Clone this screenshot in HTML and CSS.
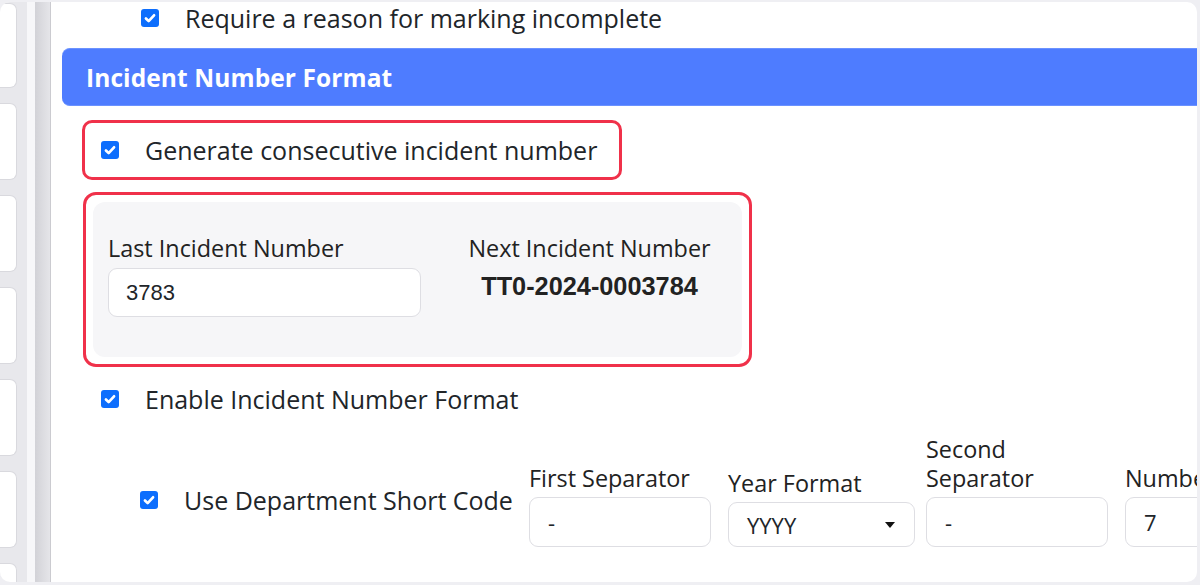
FILE: index.html
```html
<!DOCTYPE html>
<html lang="en">
<head>
<meta charset="utf-8">
<title>Incident Number Format</title>
<link rel="stylesheet" href="styles.css">
</head>
<body>
<div class="frame">
  <aside class="rail">
    <div class="rail-card rail-card-first"></div>
    <div class="rail-card"></div>
    <div class="rail-card"></div>
    <div class="rail-card"></div>
    <div class="rail-card"></div>
    <div class="rail-card"></div>
    <div class="rail-card"></div>
  </aside>
  <div class="gutter"></div>
  <div class="splitter"></div>
  <main class="content">
    <label class="check-row row-require">
      <span class="cb"><svg viewBox="0 0 20 20" width="18" height="18"><path d="M5.5 10.5l3 3 6-6.5" fill="none" stroke="#fff" stroke-width="3" stroke-linecap="round" stroke-linejoin="round"/></svg></span>
      <span class="check-text">Require a reason for marking incomplete</span>
    </label>

    <h2 class="section-head">Incident Number Format</h2>

    <div class="highlight hl-check">
      <label class="check-row">
        <span class="cb"><svg viewBox="0 0 20 20" width="18" height="18"><path d="M5.5 10.5l3 3 6-6.5" fill="none" stroke="#fff" stroke-width="3" stroke-linecap="round" stroke-linejoin="round"/></svg></span>
        <span class="check-text">Generate consecutive incident number</span>
      </label>
    </div>

    <div class="highlight hl-panel">
      <div class="panel">
        <div class="field">
          <label class="field-label">Last Incident Number</label>
          <input class="text-input num-input" type="text" value="3783">
        </div>
        <div class="next">
          <div class="field-label">Next Incident Number</div>
          <div class="next-value">TT0-2024-0003784</div>
        </div>
      </div>
    </div>

    <label class="check-row row-enable">
      <span class="cb"><svg viewBox="0 0 20 20" width="18" height="18"><path d="M5.5 10.5l3 3 6-6.5" fill="none" stroke="#fff" stroke-width="3" stroke-linecap="round" stroke-linejoin="round"/></svg></span>
      <span class="check-text">Enable Incident Number Format</span>
    </label>

    <div class="format-row">
      <label class="check-row row-dept">
        <span class="cb"><svg viewBox="0 0 20 20" width="18" height="18"><path d="M5.5 10.5l3 3 6-6.5" fill="none" stroke="#fff" stroke-width="3" stroke-linecap="round" stroke-linejoin="round"/></svg></span>
        <span class="check-text">Use Department Short Code</span>
      </label>
      <div class="field fmt-field">
        <label class="field-label">First Separator</label>
        <input class="text-input fmt-input" type="text" value="-">
      </div>
      <div class="field fmt-field fmt-year">
        <label class="field-label">Year Format</label>
        <div class="select-box">
          <span>YYYY</span>
          <svg class="caret" viewBox="0 0 10 6" width="10" height="6"><path d="M0 0h10L5 6z" fill="#111"/></svg>
        </div>
      </div>
      <div class="field fmt-field">
        <label class="field-label">Second<br>Separator</label>
        <input class="text-input fmt-input" type="text" value="-">
      </div>
      <div class="field fmt-field fmt-last">
        <label class="field-label nowrap">Number</label>
        <input class="text-input fmt-input" type="text" value="7">
      </div>
    </div>
  </main>
</div>
</body>
</html>
```

FILE: styles.css
```css
html, body {
  margin: 0;
  padding: 0;
}

body {
  background: #efeff3;
  font-family: "Open Sans", "Noto Sans", sans-serif;
  color: #212529;
  overflow: hidden;
}

.frame {
  display: flex;
  width: 1197px;
  height: 580px;
  margin-top: 2px;
  background: #fff;
  border-radius: 10px;
  overflow: hidden;
}

/* left rail */
.rail {
  width: 27px;
  flex: none;
  background: #e8e8ec;
  display: flex;
  flex-direction: column;
  gap: 15px;
  padding-top: 1px;
  box-sizing: border-box;
}

.rail-card {
  flex: none;
  width: 17px;
  height: 77px;
  box-sizing: border-box;
  background: #fff;
  border: 1px solid #d9d9de;
  border-left: none;
  border-radius: 0 7px 7px 0;
}

.rail-card-first {
  height: 85px;
}

.gutter {
  width: 8px;
  flex: none;
  background: #f7f7f9;
}

.splitter {
  width: 15px;
  flex: none;
  background: linear-gradient(90deg, #d2d2d7, #e5e5e9);
  border-right: 1px solid #cbcbd0;
}

/* main content */
.content {
  flex: 1;
  min-width: 0;
  padding-left: 11px;
  overflow: hidden;
}

.check-row {
  display: flex;
  align-items: center;
  gap: 26px;
  font-size: 25px;
  line-height: 32px;
  white-space: nowrap;
}

.cb {
  flex: none;
  width: 18px;
  height: 18px;
  border-radius: 3px;
  background: #0d6efd;
  display: flex;
  align-items: center;
  justify-content: center;
}

.cb svg {
  display: block;
}

.row-require {
  height: 31px;
  padding-left: 79px;
}

.section-head {
  margin: 15px 0 0;
  height: 58px;
  box-sizing: border-box;
  padding-left: 24px;
  display: flex;
  align-items: center;
  background: #4e7cff;
  border-top: 1px solid #6b92ff;
  border-bottom: 1px solid #6b92ff;
  border-radius: 8px 0 0 8px;
  color: #fff;
  font-size: 24.5px;
  font-weight: 700;
  letter-spacing: 0.1px;
}

.highlight {
  box-sizing: border-box;
  border: 3px solid #f0314a;
}

.hl-check {
  margin: 14px 0 0 20px;
  width: 540px;
  height: 60px;
  border-radius: 10px;
  padding-left: 16px;
  display: flex;
  align-items: center;
}

.hl-panel {
  margin: 12px 0 0 21px;
  width: 669px;
  height: 175px;
  border-radius: 13px;
  padding: 7px;
}

.panel {
  height: 100%;
  box-sizing: border-box;
  background: #f6f6f8;
  border-radius: 12px;
  padding: 31px 0 0 15px;
  display: grid;
  grid-template-columns: 313px 1fr;
  column-gap: 16px;
  align-items: start;
}

.field {
  display: flex;
  flex-direction: column;
}

.field-label {
  font-size: 23.4px;
  line-height: 30px;
  margin-bottom: 5px;
  color: #222;
}

.text-input {
  box-sizing: border-box;
  height: 50px;
  border: 1px solid #dedee3;
  border-radius: 9px;
  background: #fff;
  padding: 0 17px;
  font-family: "Open Sans", sans-serif;
  font-size: 22px;
  color: #212529;
  outline: none;
}

.num-input {
  width: 313px;
  height: 49px;
  font-family: "Liberation Sans", Arial, sans-serif;
}

.next {
  text-align: center;
}

.next-value {
  font-family: "Liberation Sans", Arial, sans-serif;
  font-weight: 700;
  font-size: 25.3px;
  line-height: 30px;
  margin-top: 8px;
  color: #222;
}

.row-enable {
  margin-top: 14px;
  height: 36px;
  padding-left: 39px;
}

.format-row {
  margin-top: 18px;
  display: flex;
  align-items: flex-end;
  padding-left: 78px;
}

.row-dept {
  width: 389px;
  flex: none;
  box-sizing: border-box;
  margin-bottom: 31px;
}

.fmt-field {
  flex: none;
  width: 182px;
  margin-right: 17px;
}

.fmt-field .field-label {
  margin-bottom: 4px;
  line-height: 29px;
}

.nowrap {
  white-space: nowrap;
}

.fmt-input {
  width: 182px;
  padding-left: 18px;
}

.fmt-year {
  width: 187px;
  margin-right: 11px;
}

.fmt-last {
  width: 90px;
  margin-right: 0;
}

.select-box {
  box-sizing: border-box;
  height: 45px;
  border: 1px solid #dedee3;
  border-radius: 9px;
  background: #fff;
  padding: 0 19px 0 18px;
  display: flex;
  align-items: center;
  justify-content: space-between;
  font-size: 22px;
}

.caret {
  display: block;
}
```
